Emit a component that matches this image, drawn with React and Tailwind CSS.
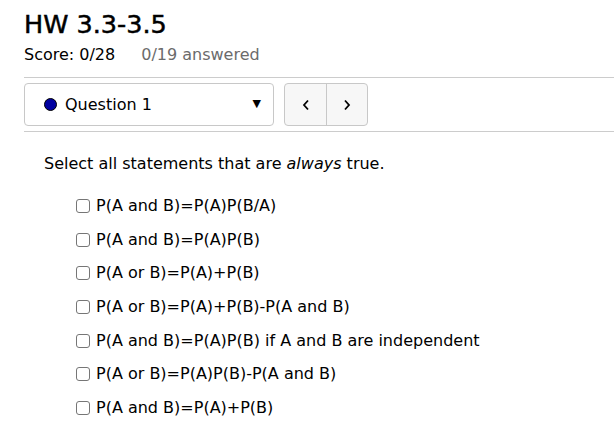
import React from 'react';

const options = [
  'P(A and B)=P(A)P(B/A)',
  'P(A and B)=P(A)P(B)',
  'P(A or B)=P(A)+P(B)',
  'P(A or B)=P(A)+P(B)-P(A and B)',
  'P(A and B)=P(A)P(B) if A and B are independent',
  'P(A or B)=P(A)P(B)-P(A and B)',
  'P(A and B)=P(A)+P(B)',
];

const App = () => {
  return (
    <div className="min-h-[437px] bg-white text-black pl-6 pt-[6px]" style={{ fontFamily: '"DejaVu Sans", "Open Sans", sans-serif' }}>
      {/* Header */}
      <h1 className="text-[25.5px] leading-[36px] font-normal [-webkit-text-stroke:0.5px_black]">HW 3.3-3.5</h1>
      <div className="flex items-center gap-[26px] text-[16px] leading-[24px] mt-[1px]">
        <span>Score: 0/28</span>
        <span className="text-[#6b6b6b]">0/19 answered</span>
      </div>

      {/* Navigation bar */}
      <div className="mt-[10px] border-t border-b border-[#cccccc] py-[5px] flex items-center gap-[10px]">
        <div className="w-[250px] h-[43px] border border-[#c8c8c8] rounded-[4px] flex items-center pl-[19px] pr-[12px]">
          <span className="w-[13px] h-[13px] rounded-full bg-[#0000a0] border border-black mr-[8px]" />
          <span className="text-[16px]">Question 1</span>
          <span className="ml-auto text-[11px]">▼</span>
        </div>
        <div className="h-[43px] w-[84px] border border-[#c8c8c8] rounded-[4px] bg-[#f7f7f7] flex">
          <button className="w-[42px] h-full flex items-center justify-center border-r border-[#c8c8c8]">
            <svg width="8" height="12" viewBox="0 0 8 12"><path d="M6 1.5 L2 6 L6 10.5" fill="none" stroke="black" strokeWidth="1.8" /></svg>
          </button>
          <button className="flex-1 h-full flex items-center justify-center">
            <svg width="8" height="12" viewBox="0 0 8 12"><path d="M2 1.5 L6 6 L2 10.5" fill="none" stroke="black" strokeWidth="1.8" /></svg>
          </button>
        </div>
      </div>

      {/* Question */}
      <div className="pl-5 pt-[20px]">
        <p className="text-[16px] leading-[24px]">
          Select all statements that are <em>always</em> true.
        </p>
        <ul className="mt-[18px] pl-8 flex flex-col gap-[9.67px]">
          {options.map((opt, i) => (
            <li key={i} className="flex items-center text-[16px] leading-[24px]">
              <span className="w-[14px] h-[14px] border border-[#767676] rounded-[3px] bg-white mr-[6px]" />
              <span>{opt}</span>
            </li>
          ))}
        </ul>
      </div>
    </div>
  );
};

export default App;
